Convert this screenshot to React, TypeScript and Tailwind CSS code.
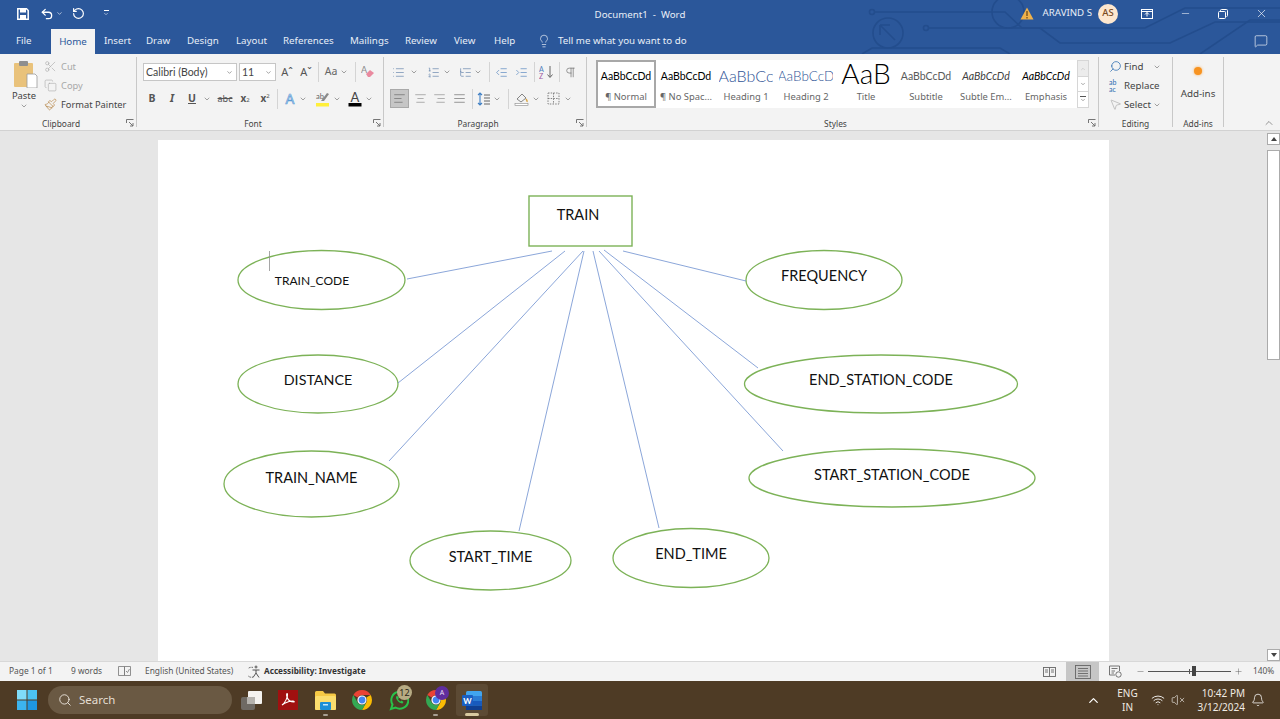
import type { ReactNode } from "react";
import {
  AlignCenter,
  AlignJustify,
  AlignLeft,
  AlignRight,
  Bell,
  ChevronDown,
  ChevronUp,
  Copy,
  IndentDecrease,
  IndentIncrease,
  Lightbulb,
  List,
  ListOrdered,
  ListTree,
  MessageSquare,
  Minus,
  MousePointer2,
  Paintbrush,
  Pilcrow,
  Plus,
  RotateCcw,
  Scissors,
  Search,
  Undo2,
  VolumeX,
  Wifi,
  X,
} from "lucide-react";

const UI = "font-['Noto_Sans','Open_Sans',sans-serif]";

const ellipses = [
  { cx: 321.5, cy: 280, rx: 83.5, ry: 29.5 },
  { cx: 318, cy: 384, rx: 80, ry: 29 },
  { cx: 311.5, cy: 484, rx: 87.5, ry: 33 },
  { cx: 490.5, cy: 560.5, rx: 80.5, ry: 29.5 },
  { cx: 691, cy: 558, rx: 78, ry: 29.5 },
  { cx: 824, cy: 280, rx: 78, ry: 29.5 },
  { cx: 881, cy: 384, rx: 136.5, ry: 29 },
  { cx: 892, cy: 478, rx: 143, ry: 29 },
];

const links = [
  [407, 279, 552, 251],
  [398, 383, 565, 251],
  [389, 461, 583, 251],
  [519, 531, 584, 251],
  [593, 251, 659, 528],
  [599, 251, 783, 451],
  [604, 250, 758, 368],
  [623, 251, 746, 281],
];

const labels = [
  { text: "TRAIN", x: 578, y: 220, size: 14.5 },
  { text: "TRAIN_CODE", x: 312, y: 285, size: 12 },
  { text: "DISTANCE", x: 318, y: 385, size: 14.3 },
  { text: "TRAIN_NAME", x: 311.5, y: 483, size: 14.5 },
  { text: "START_TIME", x: 490.5, y: 562, size: 14.5 },
  { text: "END_TIME", x: 691, y: 559, size: 14.5 },
  { text: "FREQUENCY", x: 824, y: 281, size: 14.5 },
  { text: "END_STATION_CODE", x: 881, y: 385, size: 14.5 },
  { text: "START_STATION_CODE", x: 892, y: 480, size: 14.5 },
];

const styles = [
  { preview: "AaBbCcDd", label: "¶ Normal", cls: "text-[10.5px] text-black", selected: true },
  { preview: "AaBbCcDd", label: "¶ No Spac...", cls: "text-[10.5px] text-black" },
  { preview: "AaBbCc", label: "Heading 1", cls: "text-[16px] font-light text-[#2f5496]" },
  { preview: "AaBbCcD", label: "Heading 2", cls: "text-[13.5px] font-light text-[#2f5496]" },
  { preview: "AaB", label: "Title", cls: "pb-[5px] text-[28px] font-light text-black" },
  { preview: "AaBbCcDd", label: "Subtitle", cls: "text-[10.5px] text-[#5a5a5a]" },
  { preview: "AaBbCcDd", label: "Subtle Em...", cls: "text-[10.5px] italic text-[#404040]" },
  { preview: "AaBbCcDd", label: "Emphasis", cls: "text-[10.5px] italic text-black" },
];

const tabs = [
  { name: "Insert", cls: "ml-[9px] w-[42px]" },
  { name: "Draw", cls: "w-[41px]" },
  { name: "Design", cls: "w-[49px]" },
  { name: "Layout", cls: "w-[47px]" },
  { name: "References", cls: "w-[67px]" },
  { name: "Mailings", cls: "w-[55px]" },
  { name: "Review", cls: "w-[49px]" },
  { name: "View", cls: "w-[40px]" },
  { name: "Help", cls: "w-[43px]" },
];

const icon = { size: 13, strokeWidth: 1.2, color: "#666666" };

function Slot({ className, children }: { className: string; children: ReactNode }) {
  return <div className={`flex h-[18px] shrink-0 items-center justify-center ${className}`}>{children}</div>;
}

function Chev({ className = "w-[10px]" }: { className?: string }) {
  return (
    <Slot className={className}>
      <ChevronDown size={8} strokeWidth={1.6} color="#555555" />
    </Slot>
  );
}

function Sep({ className }: { className: string }) {
  return <div className={`h-[20px] w-px shrink-0 bg-[#d4d4d4] ${className}`} />;
}

function Launcher() {
  return (
    <svg width="8" height="8" viewBox="0 0 8 8" className="absolute right-[2px] top-[3px]" fill="none" stroke="#666666" strokeWidth="0.9">
      <path d="M0.5 4V0.5H7.5" />
      <path d="M3 3L7 7M7 4V7H4" />
    </svg>
  );
}

function Group({ label, className, launcher, children }: { label: string; className: string; launcher?: boolean; children: ReactNode }) {
  return (
    <>
      <div className={`flex h-[76px] shrink-0 flex-col ${className}`}>
        <div className="min-h-0 flex-1">{children}</div>
        <div className={`relative h-[14px] pt-[1px] text-center text-[8.4px] leading-[13px] text-[#444444] ${launcher ? "pr-[14px]" : ""}`}>
          {label}
          {launcher && <Launcher />}
        </div>
      </div>
      <div className="my-[3px] w-px shrink-0 bg-[#c8c8c8]" />
    </>
  );
}

function ClipboardGroup() {
  return (
    <Group label="Clipboard" className="w-[136px]" launcher>
      <div className="flex">
        <div className="ml-[10px] flex w-[28px] flex-col items-center pt-[6px]">
          <svg width="28" height="28" viewBox="0 0 28 28">
            <rect x="4" y="3" width="19" height="24" rx="1" fill="#e9c27b" />
            <rect x="9" y="1" width="9" height="5" rx="1" fill="#8f8f8f" />
            <path d="M17 14H25L27 16V28H17Z" fill="#ffffff" stroke="#9a9a9a" strokeWidth="0.8" />
          </svg>
          <div className="mt-[1px] text-[9.4px] leading-[13px] text-[#444444]">Paste</div>
          <ChevronDown size={8} strokeWidth={1.6} color="#555555" />
        </div>
        <div className="ml-[6px] flex flex-col pt-[3px] text-[9.3px] leading-[19px]">
          <div className="flex h-[19px] items-center gap-[4px] text-[#a8a8a8]">
            <Scissors size={13} strokeWidth={1.1} color="#a8a8a8" />
            Cut
          </div>
          <div className="flex h-[19px] items-center gap-[4px] text-[#a8a8a8]">
            <Copy size={13} strokeWidth={1.1} color="#a8a8a8" />
            Copy
          </div>
          <div className="flex h-[19px] items-center gap-[4px] whitespace-nowrap text-[#444444]">
            <Paintbrush size={13} strokeWidth={1.3} color="#b6884a" />
            Format Painter
          </div>
        </div>
      </div>
    </Group>
  );
}

function FontGroup() {
  return (
    <Group label="Font" className="w-[246px]" launcher>
      <div className="mt-[9px] flex h-[18px] items-center">
        <div className="ml-[6px] flex h-[18px] w-[94px] items-center justify-between border border-[#c6c6c6] bg-white pl-[2px] pr-[3px] pt-[1px] font-['Lato',sans-serif] text-[10.5px] text-[#444444]">
          Calibri (Body)
          <ChevronDown size={7} strokeWidth={2} color="#666666" />
        </div>
        <div className="ml-[2px] flex h-[18px] w-[37px] items-center justify-between border border-[#c6c6c6] bg-white pl-[2px] pr-[3px] pt-[1px] font-['Lato',sans-serif] text-[10.5px] text-[#444444]">
          11
          <ChevronDown size={7} strokeWidth={2} color="#666666" />
        </div>
        <Slot className="ml-[2px] w-[18px] text-[11px] text-[#555555]">Aˆ</Slot>
        <Slot className="ml-[1px] w-[18px] text-[11px] text-[#555555]">Aˇ</Slot>
        <Sep className="ml-[3px]" />
        <Slot className="ml-[3px] w-[18px] text-[10.5px] text-[#666666]">Aa</Slot>
        <Chev className="w-[8px]" />
        <Sep className="ml-[7px]" />
        <Slot className="ml-[3px] w-[18px]">
          <svg width="14" height="14" viewBox="0 0 14 14">
            <text x="0" y="8" fontSize="9" fill="#8a8a8a" fontFamily="Lato">A</text>
            <path d="M5 9L9 5L13 8L9 12H7Z" fill="#e98a9f" />
          </svg>
        </Slot>
      </div>
      <div className="mt-[8px] flex h-[18px] items-center pt-[1px] text-[#555555]">
        <Slot className="ml-[5px] w-[20px] text-[10.5px] font-bold">B</Slot>
        <Slot className="w-[20px] text-[10.5px] font-bold italic">I</Slot>
        <Slot className="w-[20px] text-[10.5px] font-bold underline">U</Slot>
        <Chev />
        <Slot className="ml-[3px] w-[20px] text-[9px] line-through">abc</Slot>
        <Slot className="w-[20px] text-[10px] font-bold">
          x<sub className="text-[6px] font-normal">2</sub>
        </Slot>
        <Slot className="w-[20px] text-[10px] font-bold">
          x<sup className="text-[6px] font-normal">2</sup>
        </Slot>
        <Sep className="ml-[2px]" />
        <Slot className="ml-[3px] w-[18px]">
          <svg width="16" height="16" viewBox="0 0 16 16">
            <text x="8" y="13" textAnchor="middle" fontSize="13" fontFamily="Lato" fill="#dbe8f7" stroke="#5b9bd5" strokeWidth="0.7">A</text>
          </svg>
        </Slot>
        <Chev className="w-[8px]" />
        <Slot className="ml-[6px] w-[18px]">
          <svg width="15" height="16" viewBox="0 0 15 16">
            <text x="1" y="8" fontSize="7.5" fontFamily="Lato" fill="#666666">ab</text>
            <path d="M6 10L12 2L14 3L9 10Z" fill="#8a8a8a" />
            <rect x="1" y="12" width="13" height="3.5" fill="#ffef3a" />
          </svg>
        </Slot>
        <Chev className="ml-[1px] w-[10px]" />
        <Slot className="ml-[4px] w-[18px]">
          <svg width="14" height="16" viewBox="0 0 14 16">
            <text x="7" y="11" textAnchor="middle" fontSize="13" fontFamily="Lato" fill="#444444">A</text>
            <rect x="0.5" y="12" width="13" height="3.5" fill="#000000" />
          </svg>
        </Slot>
        <Chev />
      </div>
    </Group>
  );
}

function ParagraphGroup() {
  return (
    <Group label="Paragraph" className="w-[202px]" launcher>
      <div className="mt-[9px] flex h-[18px] items-center">
        <Slot className="ml-[5px] w-[18px]"><List {...icon} color="#5f7fa8" /></Slot>
        <Chev className="ml-[2px] w-[10px]" />
        <Slot className="ml-[5px] w-[18px]"><ListOrdered {...icon} color="#5f7fa8" /></Slot>
        <Chev />
        <Slot className="ml-[4px] w-[18px]"><ListTree {...icon} color="#5f7fa8" /></Slot>
        <Chev className="w-[8px]" />
        <Sep className="ml-[7px]" />
        <Slot className="ml-[2px] w-[18px]"><IndentDecrease {...icon} color="#4f81bd" /></Slot>
        <Slot className="ml-[2px] w-[18px]"><IndentIncrease {...icon} color="#4f81bd" /></Slot>
        <Sep className="ml-[4px]" />
        <Slot className="ml-[2px] w-[18px]">
          <svg width="15" height="14" viewBox="0 0 15 14" fill="none">
            <text x="0" y="6.5" fontSize="7" fontFamily="Lato" fill="#4f81bd">A</text>
            <text x="0" y="13.5" fontSize="7" fontFamily="Lato" fill="#a05aa0">Z</text>
            <path d="M11 1V12M8.5 9.5L11 12.5L13.5 9.5" stroke="#666666" strokeWidth="1" />
          </svg>
        </Slot>
        <Sep className="ml-[4px]" />
        <Slot className="ml-[1px] w-[18px]"><Pilcrow {...icon} /></Slot>
      </div>
      <div className="mt-[8px] flex h-[19px] items-center">
        <Slot className="ml-[6px] h-[19px] w-[19px] border border-[#a9a9a9] bg-[#c6c6c6]"><AlignLeft {...icon} /></Slot>
        <Slot className="ml-[2px] w-[18px]"><AlignCenter {...icon} color="#8a8a8a" /></Slot>
        <Slot className="ml-[1px] w-[18px]"><AlignRight {...icon} color="#8a8a8a" /></Slot>
        <Slot className="ml-[2px] w-[18px]"><AlignJustify {...icon} /></Slot>
        <Sep className="ml-[4px]" />
        <Slot className="ml-[2px] w-[18px]">
          <svg width="14" height="14" viewBox="0 0 14 14" fill="none">
            <path d="M3 1V13M1 3L3 1L5 3M1 11L3 13L5 11" stroke="#3f7fc4" strokeWidth="1.1" />
            <path d="M7 3H13M7 6H13M7 9H13M7 12H13" stroke="#666666" strokeWidth="1" />
          </svg>
        </Slot>
        <Chev className="w-[8px]" />
        <Sep className="ml-[7px]" />
        <Slot className="ml-[3px] w-[18px]">
          <svg width="15" height="15" viewBox="0 0 15 15" fill="none">
            <path d="M3 8L8 3L12 7L7 11Z" stroke="#777777" strokeWidth="0.9" />
            <path d="M12 8C13 9.5 13.5 10 13 11" stroke="#d9a441" strokeWidth="1.4" />
            <rect x="1" y="12.5" width="13" height="2" fill="#ffffff" stroke="#888888" strokeWidth="0.6" />
          </svg>
        </Slot>
        <Chev className="ml-[1px] w-[10px]" />
        <Slot className="ml-[3px] w-[18px]">
          <svg width="13" height="13" viewBox="0 0 13 13" fill="none" stroke="#777777" strokeWidth="0.9" strokeDasharray="1.5 1.2">
            <rect x="1" y="1" width="11" height="11" />
            <path d="M6.5 1V12M1 6.5H12" />
          </svg>
        </Slot>
        <Chev className="ml-[1px] w-[10px]" />
      </div>
    </Group>
  );
}

function StylesGroup() {
  return (
    <Group label="Styles" className="w-[511px]" launcher>
      <div className="ml-[9px] mt-[6px] flex h-[48px] w-[493px]">
        <div className="flex w-[481px] items-stretch bg-white">
          {styles.map((s) => (
            <div
              key={s.label}
              className={`flex w-[60px] shrink-0 flex-col items-center overflow-hidden ${s.selected ? "border-2 border-[#a8a8a8]" : "border-2 border-transparent"}`}
            >
              <div className={`flex h-[27px] w-[54px] items-center justify-center overflow-hidden whitespace-nowrap font-['Lato',sans-serif] leading-[22px] ${s.cls}`}>
                {s.preview}
              </div>
              <div className="whitespace-nowrap pt-[1px] text-[9.4px] leading-[13px] text-[#666666]">{s.label}</div>
            </div>
          ))}
        </div>
        <div className="flex w-[12px] flex-col border border-[#d6d6d6] bg-white">
          <div className="flex h-[16px] items-center justify-center border-b border-[#d6d6d6] bg-[#ececec]">
            <ChevronUp size={6} strokeWidth={2} color="#b5b5b5" />
          </div>
          <div className="flex h-[15px] items-center justify-center border-b border-[#d6d6d6]">
            <ChevronDown size={6} strokeWidth={2} color="#555555" />
          </div>
          <div className="flex flex-1 flex-col items-center justify-center">
            <div className="h-px w-[6px] bg-[#555555]" />
            <ChevronDown size={6} strokeWidth={2} color="#555555" />
          </div>
        </div>
      </div>
    </Group>
  );
}

function EditingGroup() {
  return (
    <Group label="Editing" className="w-[73px]">
      <div className="flex flex-col pl-[10px] pt-[3px] text-[9.7px] leading-[19px] text-[#444444]">
        <div className="flex h-[19px] items-center gap-[2px]">
          <Search size={13} strokeWidth={1.4} color="#2b6cb0" className="-scale-x-100" />
          Find
          <ChevronDown size={8} strokeWidth={1.6} color="#555555" className="ml-[8px]" />
        </div>
        <div className="flex h-[19px] items-center gap-[2px]">
          <div className="w-[13px] font-['Lato',sans-serif] text-[7px] leading-[7px] text-[#2b6cb0]">ab<br />ac</div>
          Replace
        </div>
        <div className="flex h-[19px] items-center gap-[2px]">
          <MousePointer2 size={13} strokeWidth={1} color="#999999" />
          Select
          <ChevronDown size={8} strokeWidth={1.6} color="#555555" />
        </div>
      </div>
    </Group>
  );
}

function AddInsGroup() {
  return (
    <Group label="Add-ins" className="w-[50px]">
      <div className="flex flex-col items-center pt-[13px]">
        <div className="h-[8px] w-[8px] rounded-full bg-[#f79321] shadow-[0_0_3px_#f9b35e]" />
        <div className="mt-[12px] text-[9.8px] leading-[14px] text-[#444444]">Add-ins</div>
      </div>
    </Group>
  );
}

function Circuit() {
  return (
    <svg className="absolute right-0 top-0 h-[54px] w-[500px]" viewBox="780 0 500 54" fill="none" stroke="#234d8d" strokeWidth="1.6">
      <circle cx="888" cy="33" r="15" />
      <path d="M880 25H890M880 25V35M880 25L895 40" />
      <circle cx="872" cy="12" r="2.5" />
      <path d="M875 12H1005L1022 28H1145L1185 8H1280" />
      <circle cx="926" cy="28" r="2.5" />
      <path d="M929 28H1040L1060 43H1170L1215 22H1280" />
      <circle cx="1008" cy="12" r="16" />
      <path d="M862 54L872 48H1000L1010 54" />
      <path d="M1200 54L1250 20H1280" />
    </svg>
  );
}

function TitleBar() {
  return (
    <div className="relative z-10 flex h-[27px] shrink-0 items-center text-white">
      <svg width="12" height="12" viewBox="0 0 12 12" className="ml-[17px]" fill="none">
        <path d="M1 0.8H9.5L11.2 2.5V11.2H0.8V0.8Z" stroke="#ffffff" strokeWidth="1.5" />
        <rect x="3" y="1" width="6" height="3.5" fill="#ffffff" />
        <rect x="3" y="7" width="6" height="4" fill="#ffffff" />
      </svg>
      <Undo2 size={14} strokeWidth={2.2} className="ml-[11px]" />
      <ChevronDown size={7} strokeWidth={2} className="ml-[2px]" />
      <RotateCcw size={13} strokeWidth={2.2} className="ml-[9px]" />
      <div className="ml-[18px] flex flex-col items-center">
        <div className="h-px w-[5px] bg-white" />
        <ChevronDown size={6} strokeWidth={2} />
      </div>
      <div className="absolute left-0 right-0 pt-[3px] text-center text-[9.7px] text-[#e8eef7]">Document1&nbsp; -&nbsp; Word</div>
      <div className="ml-auto flex items-center">
        <svg width="14" height="13" viewBox="0 0 14 13" className="mr-[9px]">
          <path d="M7 0.5L13.5 12.5H0.5Z" fill="#f0b24a" />
          <path d="M7 4V9M7 10V11.5" stroke="#5a3a10" strokeWidth="1.1" />
        </svg>
        <span className="text-[9.7px] text-[#e8eef7]">ARAVIND S</span>
        <div className="ml-[6px] flex h-[20px] w-[20px] items-center justify-center rounded-full bg-[#fde7cf] text-[9.5px] font-medium text-[#7a4a1e]">AS</div>
        <svg width="12" height="10" viewBox="0 0 12 10" className="ml-[23px]" fill="none" stroke="#ffffff" strokeWidth="1">
          <rect x="0.5" y="0.5" width="11" height="9" />
          <path d="M6 7.5V3.5M4 5.5L6 3.5L8 5.5M0.5 2.5H11.5" />
        </svg>
        <Minus size={11} strokeWidth={1.2} className="ml-[27px]" />
        <svg width="10" height="10" viewBox="0 0 10 10" className="ml-[27px]" fill="none" stroke="#ffffff" strokeWidth="1">
          <rect x="0.5" y="2.5" width="7" height="7" rx="1" />
          <path d="M2.5 2.5V1.5Q2.5 0.5 3.5 0.5H8.5Q9.5 0.5 9.5 1.5V6.5Q9.5 7.5 8.5 7.5" />
        </svg>
        <X size={13} strokeWidth={1.2} className="ml-[27px] mr-[12px]" />
      </div>
    </div>
  );
}

function TabRow() {
  return (
    <div className="relative z-10 flex h-[27px] shrink-0 items-end text-[9.75px] text-[#e8eef7]">
      <span className="mb-[5px] ml-[16px] w-[35px]">File</span>
      <div className="flex h-[25px] w-[44px] items-center justify-center bg-[#f3f3f3] pt-[1px] text-[#2b579a]">Home</div>
      {tabs.map((t) => (
        <span key={t.name} className={`mb-[5px] ${t.cls}`}>{t.name}</span>
      ))}
      <Lightbulb size={14} strokeWidth={1.2} className="mb-[6px]" />
      <span className="mb-[5px] ml-[7px]">Tell me what you want to do</span>
      <MessageSquare size={14} strokeWidth={1.1} color="#ffffff" className="mb-[6px] ml-auto mr-[12px]" />
    </div>
  );
}

function Diagram() {
  return (
    <svg className="h-[540px] w-[951px]" viewBox="158 140 951 540" fill="none">
      <rect x="529" y="196" width="103" height="50" stroke="#7cb257" strokeWidth="1.4" />
      {ellipses.map((e) => (
        <ellipse key={`${e.cx}-${e.cy}`} {...e} stroke="#7cb257" strokeWidth="1.3" />
      ))}
      {links.map(([x1, y1, x2, y2]) => (
        <line key={`${x1}-${y1}`} x1={x1} y1={y1} x2={x2} y2={y2} stroke="#6d8fcf" strokeWidth="0.8" />
      ))}
      <line x1="269.5" y1="251" x2="269.5" y2="271" stroke="#8f8f8f" strokeWidth="0.8" />
      {labels.map((l) => (
        <text key={l.text} x={l.x} y={l.y} textAnchor="middle" fontSize={l.size} fontFamily="Lato, sans-serif" fill="#111111">
          {l.text}
        </text>
      ))}
    </svg>
  );
}

function ScrollBar() {
  return (
    <div className="flex w-[13px] shrink-0 flex-col pt-[2px]">
      <div className="flex h-[12px] items-center justify-center border border-[#ababab] bg-white">
        <div className="h-0 w-0 border-x-[3px] border-b-[4px] border-x-transparent border-b-[#444444]" />
      </div>
      <div className="mt-[5px] h-[210px] border border-[#ababab] bg-white" />
      <div className="flex-1" />
      <div className="flex h-[12px] items-center justify-center border border-[#ababab] bg-white">
        <div className="h-0 w-0 border-x-[3px] border-t-[4px] border-x-transparent border-t-[#444444]" />
      </div>
    </div>
  );
}

function StatusBar() {
  return (
    <div className="flex h-[20px] shrink-0 items-center border-t border-[#d8d8d8] bg-[#f3f3f3] text-[8.4px] text-[#555555]">
      <span className="ml-[9px] w-[62px]">Page 1 of 1</span>
      <span className="w-[47px]">9 words</span>
      <svg width="13" height="11" viewBox="0 0 13 11" fill="none" stroke="#777777" strokeWidth="0.8">
        <path d="M0.5 0.5H6.5V9.5H0.5ZM6.5 0.5H12.5V9.5H6.5Z" />
        <path d="M8 5L9.5 6.5L11.5 3" />
      </svg>
      <span className="ml-[14px] w-[103px] whitespace-nowrap">English (United States)</span>
      <svg width="14" height="14" viewBox="0 0 14 14" fill="none" stroke="#555555" strokeWidth="1">
        <path d="M5 2.5A5 5 0 1 0 5 12" strokeDasharray="1.5 1" />
        <circle cx="8" cy="2" r="1" />
        <path d="M4.5 5H11.5M8 5V8M8 8L5 12.5M8 8L11 12.5" />
      </svg>
      <span className="ml-[2px] whitespace-nowrap text-[8.2px] font-bold text-[#333333]">Accessibility: Investigate</span>
      <div className="ml-auto flex h-full items-center">
        <svg width="13" height="10" viewBox="0 0 13 10" fill="none" stroke="#666666" strokeWidth="0.9">
          <rect x="0.5" y="0.5" width="12" height="9" />
          <path d="M6.5 0.5V9.5M2 3H5M2 5H5M8 3H11M8 5H11" />
        </svg>
        <div className="ml-[10px] flex h-full w-[33px] items-center justify-center bg-[#c6c6c6]">
          <svg width="16" height="14" viewBox="0 0 16 14" fill="none" stroke="#666666" strokeWidth="0.9">
            <rect x="0.5" y="0.5" width="15" height="13" />
            <path d="M3 3.5H13M3 6H13M3 8.5H13M3 11H13" />
          </svg>
        </div>
        <svg width="13" height="13" viewBox="0 0 13 13" className="ml-[10px]" fill="none" stroke="#666666" strokeWidth="0.9">
          <path d="M0.5 1H10.5V6M0.5 1V10H6M2.5 3.5H8.5M2.5 6H6M2.5 8H5" />
          <circle cx="9.5" cy="9.5" r="2.7" />
        </svg>
        <Minus size={9} strokeWidth={1.2} color="#555555" className="ml-[14px]" />
        <div className="relative ml-[3px] h-px w-[83px] bg-[#555555]">
          <div className="absolute left-[44px] top-[-5px] h-[10px] w-[4px] bg-[#444444]" />
          <div className="absolute left-[41px] top-[-2px] h-[5px] w-px bg-[#555555]" />
        </div>
        <Plus size={9} strokeWidth={1.2} color="#555555" className="ml-[3px]" />
        <span className="ml-[10px] mr-[6px] w-[21px]">140%</span>
      </div>
    </div>
  );
}

function ChromeIcon({ size = 20 }: { size?: number }) {
  return (
    <svg width={size} height={size} viewBox="0 0 20 20">
      <path d="M10 0A10 10 0 0 1 18.66 5H10A5 5 0 0 0 5.67 7.5L1.34 5A10 10 0 0 1 10 0Z" fill="#ea4335" />
      <path d="M18.66 5A10 10 0 0 1 10 20L14.33 12.5A5 5 0 0 0 14.33 7.5Z" fill="#fbbc04" />
      <path d="M10 20A10 10 0 0 1 1.34 5L5.67 12.5A5 5 0 0 0 14.33 12.5Z" fill="#34a853" />
      <circle cx="10" cy="10" r="4" fill="#4285f4" stroke="#ffffff" strokeWidth="1.2" />
    </svg>
  );
}

function TaskApp({ className, dot, children }: { className: string; dot?: boolean; children: ReactNode }) {
  return (
    <div className={`relative flex h-[32px] shrink-0 items-center justify-center ${className}`}>
      {children}
      {dot && <div className="absolute bottom-0 h-[2px] w-[5px] rounded-full bg-[#a89f92]" />}
    </div>
  );
}

function TaskBar() {
  return (
    <div className="flex h-[38px] shrink-0 items-center bg-[#4e3b25] text-[#f1ece4]">
      <svg width="20" height="20" viewBox="0 0 20 20" className="ml-[17px]">
        <rect x="0" y="0" width="9.5" height="9.5" fill="#7fdcf9" />
        <rect x="10.5" y="0" width="9.5" height="9.5" fill="#4cc2f1" />
        <rect x="0" y="10.5" width="9.5" height="9.5" fill="#3cb4ee" />
        <rect x="10.5" y="10.5" width="9.5" height="9.5" fill="#1e97e2" />
      </svg>
      <div className="ml-[11px] flex h-[28px] w-[184px] items-center rounded-full bg-[#6a5943] pl-[10px] text-[11.5px] text-[#e4ddd2]">
        <Search size={14} strokeWidth={1.5} color="#f1ece4" />
        <span className="ml-[7px]">Search</span>
      </div>
      <TaskApp className="w-[40px]">
        <svg width="22" height="20" viewBox="0 0 22 20">
          <rect x="0" y="7" width="14" height="13" rx="2" fill="#6f6a64" />
          <rect x="7" y="1" width="14" height="13" rx="1" fill="#f4f2ef" />
          <rect x="6" y="7" width="8" height="7" fill="#b5b2ad" />
        </svg>
      </TaskApp>
      <TaskApp className="ml-[-2px] w-[36px]">
        <svg width="20" height="20" viewBox="0 0 20 20" fill="none">
          <rect width="20" height="20" fill="#a01010" />
          <path d="M4 15C7 13 10 7 9.5 4C9 3 8 4 9 7C10 10 13 12 16 12C17 11 14 10.5 11 11.5C8 12.5 5 14 4 15Z" stroke="#ffffff" strokeWidth="1.1" />
        </svg>
      </TaskApp>
      <TaskApp className="ml-[1px] w-[36px]" dot>
        <svg width="21" height="19" viewBox="0 0 21 19">
          <path d="M0 1.5A1.5 1.5 0 0 1 1.5 0H8L10 2.5H19.5A1.5 1.5 0 0 1 21 4V17.5A1.5 1.5 0 0 1 19.5 19H1.5A1.5 1.5 0 0 1 0 17.5Z" fill="#f6c945" />
          <rect x="0" y="5" width="21" height="14" rx="1.5" fill="#fbdd6d" />
          <rect x="5" y="11" width="11" height="8" rx="1" fill="#1c8fd6" />
          <rect x="8" y="13" width="5" height="1.5" fill="#bfe6fb" />
        </svg>
      </TaskApp>
      <TaskApp className="w-[37px]">
        <ChromeIcon />
      </TaskApp>
      <TaskApp className="w-[37px]">
        <svg width="20" height="21" viewBox="0 0 20 21" fill="none">
          <path d="M2 19L3.5 14.5A8.5 8.5 0 1 1 6.5 17.5Z" stroke="#28c24a" strokeWidth="2" />
          <path d="M7 6.5C6.5 9 10 13.5 13.5 13.5L14.5 12L12.5 10.5L11.5 11.5C10.5 11 9.5 10 9 9L10 8L8.5 6Z" fill="#28c24a" />
        </svg>
        <div className="absolute right-[5px] top-[1px] flex h-[15px] w-[15px] items-center justify-center rounded-full bg-[#b7ab83] text-[9px] text-[#2b2416]">12</div>
      </TaskApp>
      <TaskApp className="w-[37px]" dot>
        <ChromeIcon />
        <div className="absolute right-[5px] top-[2px] flex h-[14px] w-[14px] items-center justify-center rounded-full bg-[#5f2d9e] text-[7px] text-[#e8dcf5]">A</div>
      </TaskApp>
      <TaskApp className="ml-[2px] h-[32px] w-[32px] rounded-[3px] bg-[#5c4a34]">
        <svg width="20" height="19" viewBox="0 0 20 19">
          <rect x="4" y="0" width="16" height="19" rx="1.5" fill="#41a5ee" />
          <rect x="4" y="5" width="16" height="5" fill="#2b7cd3" />
          <rect x="4" y="10" width="16" height="4.5" fill="#185abd" />
          <rect x="4" y="14.5" width="16" height="4.5" fill="#103f91" />
          <rect x="0" y="4" width="11" height="11" rx="1" fill="#1a5fc2" />
          <text x="5.5" y="12.5" textAnchor="middle" fontSize="8" fontWeight="700" fontFamily="Lato" fill="#ffffff">W</text>
        </svg>
        <div className="absolute bottom-0 h-[3px] w-[14px] rounded-full bg-[#d8c9a0]" />
      </TaskApp>
      <div className="ml-auto flex items-center text-[10px] leading-[14px]">
        <ChevronUp size={15} strokeWidth={2} color="#ffffff" />
        <div className="ml-[10px] w-[33px] text-center">ENG<br />IN</div>
        <Wifi size={14} strokeWidth={1.5} color="#ffffff" className="ml-[7px]" />
        <VolumeX size={14} strokeWidth={1.2} color="#e8e4de" className="ml-[6px]" />
        <div className="ml-[8px] w-[52px] whitespace-nowrap text-right">10:42 PM<br />3/12/2024</div>
        <Bell size={14} strokeWidth={1.3} color="#ffffff" className="ml-[6px] mr-[15px]" />
      </div>
    </div>
  );
}

export default function App() {
  return (
    <div className={`flex h-[719px] w-[1280px] flex-col overflow-hidden bg-[#e6e6e6] ${UI}`}>
      <div className="relative flex h-[54px] shrink-0 flex-col bg-[#2b579a]">
        <Circuit />
        <TitleBar />
        <TabRow />
      </div>
      <div className="flex h-[77px] shrink-0 border-b border-[#d2d2d2] bg-[#f3f3f3]">
        <ClipboardGroup />
        <FontGroup />
        <ParagraphGroup />
        <StylesGroup />
        <EditingGroup />
        <AddInsGroup />
        <div className="flex flex-1 items-end justify-end pb-[1px] pr-[5px]">
          <ChevronUp size={12} strokeWidth={1.2} color="#555555" />
        </div>
      </div>
      <div className="flex min-h-0 flex-1">
        <div className="min-h-0 flex-1 overflow-hidden pl-[158px] pt-[9px]">
          <div className="h-[540px] w-[951px] bg-white">
            <Diagram />
          </div>
        </div>
        <ScrollBar />
      </div>
      <StatusBar />
      <TaskBar />
    </div>
  );
}
